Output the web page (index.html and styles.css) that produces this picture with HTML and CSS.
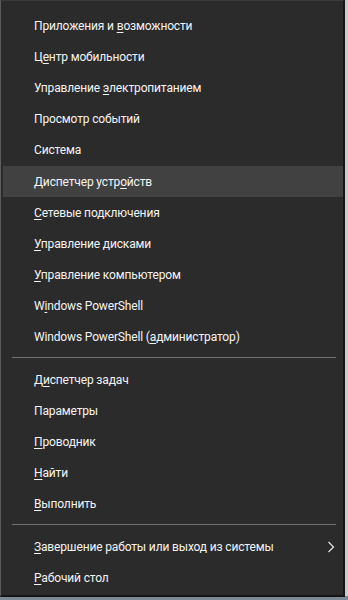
FILE: index.html
```html
<!DOCTYPE html>
<html lang="ru">
<head>
    <meta charset="UTF-8">
    <meta name="viewport" content="width=device-width, initial-scale=1.0">
    <title>Меню Win+X</title>
    <link rel="stylesheet" href="styles.css">
</head>
<body>
    <div class="screen">
        <nav class="menu">
            <ul class="group">
                <li class="item"><span class="label">Приложения и <u>в</u>озможности</span></li>
                <li class="item"><span class="label">Ц<u>е</u>нтр мобильности</span></li>
                <li class="item"><span class="label">Управление <u>э</u>лектропитанием</span></li>
                <li class="item"><span class="label">Просмотр событий</span></li>
                <li class="item"><span class="label">Система</span></li>
                <li class="item active"><span class="label">Диспетчер устр<u>о</u>йств</span></li>
                <li class="item"><span class="label"><u>С</u>етевые подключения</span></li>
                <li class="item"><span class="label"><u>У</u>правление дисками</span></li>
                <li class="item"><span class="label"><u>У</u>правление компьютером</span></li>
                <li class="item"><span class="label">W<u>i</u>ndows PowerShell</span></li>
                <li class="item"><span class="label">Windows PowerShell (<u>а</u>дминистратор)</span></li>
            </ul>
            <hr class="sep">
            <ul class="group">
                <li class="item"><span class="label">Д<u>и</u>спетчер задач</span></li>
                <li class="item"><span class="label">Параметры</span></li>
                <li class="item"><span class="label"><u>П</u>роводник</span></li>
                <li class="item"><span class="label"><u>Н</u>айти</span></li>
                <li class="item"><span class="label"><u>В</u>ыполнить</span></li>
            </ul>
            <hr class="sep">
            <ul class="group">
                <li class="item">
                    <span class="label"><u>З</u>авершение работы или выход из системы</span>
                    <svg class="chevron" width="8" height="12" viewBox="0 0 8 12">
                        <polyline points="1.5,1 6.5,6 1.5,11" fill="none" stroke="#e6e6e6" stroke-width="1.2"/>
                    </svg>
                </li>
                <li class="item"><span class="label"><u>Р</u>абочий стол</span></li>
            </ul>
        </nav>
    </div>
</body>
</html>
```

FILE: styles.css
```css
html, body {
    margin: 0;
    padding: 0;
}
body {
    width: 348px;
    height: 600px;
    background-color: #c9cbcd;
    font-family: Roboto, "Noto Sans", sans-serif;
    overflow: hidden;
}
.screen {
    width: 348px;
    height: 600px;
    background: linear-gradient(to bottom, #c9cbcd 0, #c9cbcd 596px, #7d8a95 596px);
}
.menu {
    box-sizing: border-box;
    width: 345px;
    height: 597px;
    padding: 9px 0 0 2px;
    background-color: #2b2b2b;
    border-left: 1px solid #5c5c5c;
    border-top: 1px solid #3a3a3a;
    border-right: 2px solid #151515;
    border-bottom: 2px solid #151515;
}
.group {
    list-style: none;
    margin: 0;
    padding: 0;
}
.item {
    display: flex;
    align-items: center;
    justify-content: space-between;
    height: 31.2px;
    padding: 0 8px 0 31px;
    color: #f4f4f4;
    font-size: 12px;
    letter-spacing: -0.15px;
}
.item.active {
    background-color: #414141;
}
.item u {
    text-decoration-thickness: 1px;
    text-underline-offset: 2px;
}
.chevron {
    display: block;
}
.sep {
    margin: 4px 7px 6px 9px;
    border: none;
    border-top: 1px solid #707070;
    height: 0;
}
```
